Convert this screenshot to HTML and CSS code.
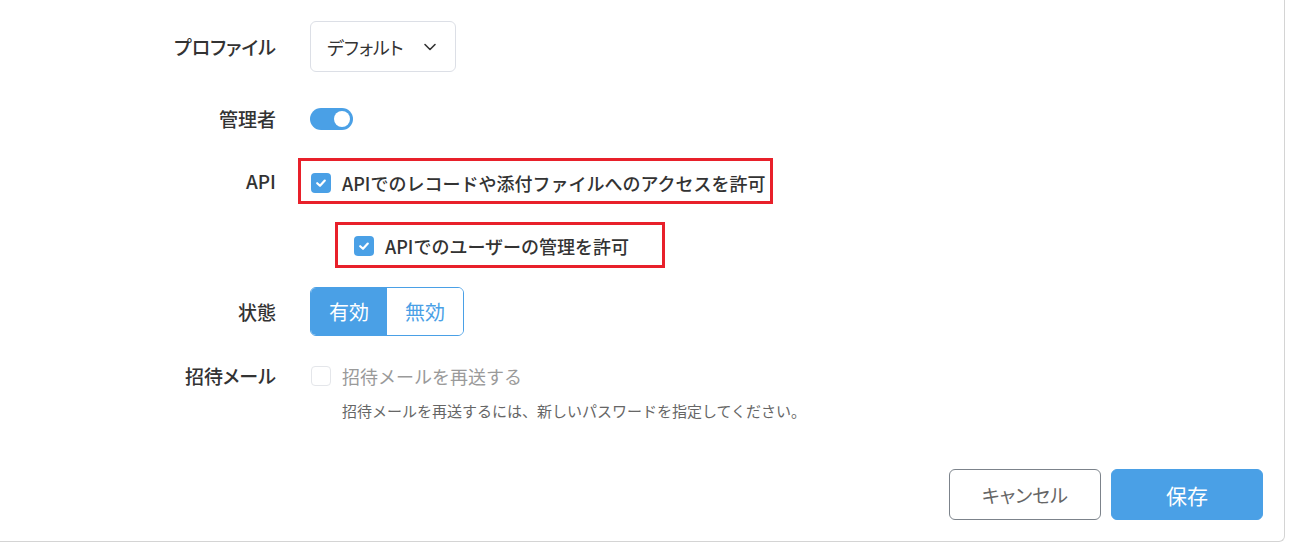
FILE: index.html
```html
<!DOCTYPE html>
<html lang="ja">
<head>
<meta charset="utf-8">
<title>ユーザー編集</title>
<link rel="stylesheet" href="styles.css">
</head>
<body>
<div class="card">
  <form class="form">
    <div class="row row-profile">
      <div class="label">プロファイル</div>
      <div class="control">
        <div class="select">
          <span>デフォルト</span>
          <svg class="chev" width="14" height="14" viewBox="0 0 14 14"><path d="M2 4.5 L7 9.5 L12 4.5" fill="none" stroke="#333" stroke-width="1.6" stroke-linecap="round" stroke-linejoin="round"/></svg>
        </div>
      </div>
    </div>
    <div class="row row-admin">
      <div class="label">管理者</div>
      <div class="control">
        <div class="toggle"><span class="knob"></span></div>
      </div>
    </div>
    <div class="row row-api">
      <div class="label">API</div>
      <div class="control">
        <div class="mark mark-api">
          <span class="check on"><svg width="14" height="14" viewBox="0 0 14 14"><path d="M3.2 7.2 L6 9.8 L10.8 4.6" fill="none" stroke="#fff" stroke-width="2.2" stroke-linecap="round" stroke-linejoin="round"/></svg></span>
          <span class="cb-text">APIでのレコードや添付ファイルへのアクセスを許可</span>
        </div>
      </div>
    </div>
    <div class="row row-sub">
      <div class="label"></div>
      <div class="control">
        <div class="mark mark-sub">
          <span class="check on"><svg width="14" height="14" viewBox="0 0 14 14"><path d="M3.2 7.2 L6 9.8 L10.8 4.6" fill="none" stroke="#fff" stroke-width="2.2" stroke-linecap="round" stroke-linejoin="round"/></svg></span>
          <span class="cb-text">APIでのユーザーの管理を許可</span>
        </div>
      </div>
    </div>
    <div class="row row-status">
      <div class="label">状態</div>
      <div class="control">
        <div class="seg">
          <span class="seg-btn active">有効</span>
          <span class="seg-btn">無効</span>
        </div>
      </div>
    </div>
    <div class="row row-invite">
      <div class="label">招待メール</div>
      <div class="control">
        <div class="cb-line">
          <span class="check off"></span>
          <span class="cb-text disabled">招待メールを再送する</span>
        </div>
      </div>
    </div>
    <div class="row row-hint">
      <div class="label"></div>
      <div class="control hint">招待メールを再送するには、新しいパスワードを指定してください。</div>
    </div>
    <div class="actions">
      <button type="button" class="btn btn-cancel">キャンセル</button>
      <button type="button" class="btn btn-save">保存</button>
    </div>
  </form>
</div>
</body>
</html>
```

FILE: styles.css
```css
* { box-sizing: border-box; }
html, body { margin: 0; padding: 0; background: #fff; }
body {
  font-family: "Noto Sans CJK JP", "Noto Sans", sans-serif;
  color: #333;
}
.card {
  width: 1285px;
  height: 542px;
  border-right: 1px solid #d4d4d4;
  border-bottom: 1px solid #d4d4d4;
  border-bottom-right-radius: 6px;
  background: #fff;
}
.form {
  display: flex;
  flex-direction: column;
  padding: 21px 21px 0 0;
}
.row {
  display: grid;
  grid-template-columns: 276px 1fr;
  column-gap: 34px;
  align-items: center;
}
.label {
  text-align: right;
  font-size: 19px;
  font-weight: 500;
  color: #333;
  line-height: 24px;
  font-feature-settings: "palt";
}
.control { display: flex; align-items: center; }

.row-profile { height: 51px; }
.select {
  width: 146px;
  height: 51px;
  border: 1px solid #dcdfe6;
  border-radius: 6px;
  display: flex;
  align-items: center;
  justify-content: space-between;
  padding: 0 18px 0 16px;
  font-size: 18px;
  color: #333;
  font-feature-settings: "palt";
}
.chev { display: block; }

.row-admin { height: 46px; margin-top: 24px; }
.toggle {
  width: 43px;
  height: 22px;
  border-radius: 11px;
  background: #4aa0e6;
  display: flex;
  align-items: center;
  justify-content: flex-end;
  padding-right: 3px;
}
.knob { width: 16px; height: 16px; border-radius: 50%; background: #fff; }

.row-api { height: 46px; margin-top: 16px; }
.row-sub { height: 46px; margin-top: 18px; }
.mark {
  height: 46px;
  border: 3px solid #e8202a;
  display: flex;
  align-items: center;
  gap: 11px;
}
.mark-api { width: 475px; margin-left: -12px; padding-left: 10px; padding-top: 4px; }
.mark-sub { width: 330px; margin-left: 25px; padding-left: 16px; padding-top: 2px; }

.check {
  width: 20px;
  height: 20px;
  border-radius: 4px;
  flex: none;
  display: flex;
  align-items: center;
  justify-content: center;
}
.check.on { background: #4aa0e6; }
.check.off { border: 1px solid #e4e6ea; background: #fff; }
.cb-text { font-size: 18px; font-weight: 500; color: #333; line-height: 24px; }
.cb-text.disabled { color: #9a9a9a; font-weight: 400; }

.row-status { height: 49px; margin-top: 19px; }
.seg {
  display: flex;
  height: 49px;
  border: 1px solid #4aa0e6;
  border-radius: 6px;
  overflow: hidden;
}
.seg-btn {
  width: 76px;
  display: flex;
  align-items: center;
  justify-content: center;
  font-size: 20px;
  color: #4aa0e6;
  background: #fff;
}
.seg-btn.active { background: #4aa0e6; color: #fff; }

.row-invite { height: 24px; margin-top: 28px; }
.cb-line { display: flex; align-items: center; gap: 11px; margin-left: 1px; }
.row-hint { margin-top: 13px; }
.hint { font-size: 15px; color: #666; line-height: 20px; padding-left: 32px; }

.actions {
  display: flex;
  justify-content: flex-end;
  gap: 10px;
  margin-top: 48px;
}
.btn {
  width: 152px;
  height: 51px;
  border-radius: 6px;
  font-family: inherit;
  font-size: 19px;
  cursor: pointer;
  font-feature-settings: "palt";
}
.btn-cancel { background: #fff; border: 1px solid #7c838b; color: #666; }
.btn-save { background: #4aa0e6; border: 1px solid #4aa0e6; color: #fff; font-size: 21px; }
```
